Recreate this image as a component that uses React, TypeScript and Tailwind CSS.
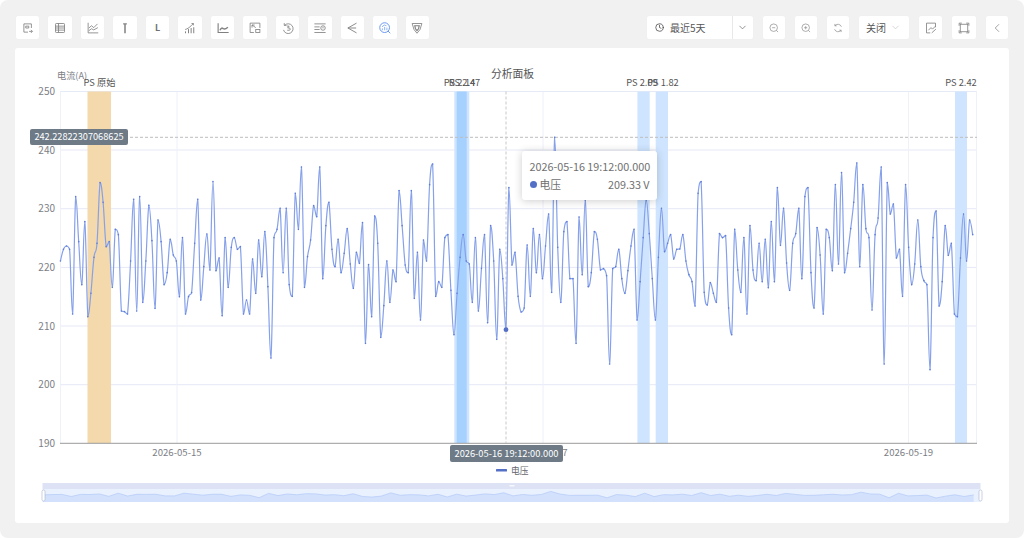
import React from "react";
import { ChevronDown, ChevronLeft, Clock } from "lucide-react";

// sampled series, y offsets read from the chart (3x, relative to y=140)
const RAW = [
  363, 328, 318, 328, 522, 170, 305, 434, 245, 530, 460, 352, 310, 128, 187, 320, 305, 442, 268, 284, 513, 515, 522, 363,
  178, 513, 170, 487, 363, 196, 302, 505, 240, 305, 434, 398, 298, 345, 363, 470, 293, 522, 470, 458, 310, 178, 480, 380,
  282, 390, 125, 392, 354, 527, 293, 442, 322, 293, 328, 320, 522, 480, 522, 357, 460, 300, 410, 275, 440,
  654, 293, 268, 205, 398, 205, 434, 469, 160, 268, 81, 442, 350, 300, 197, 230, 81, 416, 257, 187, 328, 380, 298, 398,
  340, 266, 372, 445, 337, 370, 248, 610, 374, 530, 228, 310, 592, 497, 363, 487, 390, 425, 152, 257, 375, 398, 152, 475,
  337, 540, 300, 363, 134, 72, 469, 425, 442, 293, 284, 451, 584, 460, 352, 284, 363, 372, 487, 293, 513, 385, 284, 548,
  257, 363, 598, 328, 416,
  569, 143, 375, 337, 469, 516, 504, 315, 469, 266, 398, 284, 416, 318, 222, 457, -8, 322, 487, 275, 245, 416, 416, 610,
  231, 404, 180, 440, 398, 275, 298, 390, 386, 407, 672, 386, 380, 328, 416, 460, 392, 318, 268, 540, 425, 293, 180, 281,
  416, 540, 352, 205, 335, 310, 284, 357, 328, 327, 284, 363, 404, 425, 498, 160, 125, 457, 495, 428, 460, 487, 281, 293,
  287, 504, 584, 268, 390,
  457, 293, 522, 257, 390, 422, 310, 425, 298, 443, 245, 425, 143, 316, 205, 369, 451, 310, 281, 205, 416, 170, 143, 398,
  504, 263, 345, 522, 268, 293, 392, 134, 372, 98, 398, 340, 266, 187, 69, 380, 134, 266, 293, 510, 284, 234, 81, 672,
  128, 222, 192, 354, 328, 469, 134, 322, 434, 372, 240, 380, 422, 434, 689, 293, 213, 498, 425, 257, 346, 310, 522, 530,
  354, 222, 363, 240, 284,
];

const STEP = (972.7 - 60.4) / (RAW.length - 1);
const points = RAW.map((z, i) => [60.4 + i * STEP, 140 + z / 3]);

const clamp = (v: number, a: number, b: number) => Math.min(Math.max(a, b), Math.max(Math.min(a, b), v));

const smoothPath = (pts: number[][]) => {
  let d = `M${pts[0][0].toFixed(1)} ${pts[0][1].toFixed(1)}`;
  for (let i = 0; i < pts.length - 1; i++) {
    const p0 = pts[Math.max(i - 1, 0)];
    const p1 = pts[i];
    const p2 = pts[i + 1];
    const p3 = pts[Math.min(i + 2, pts.length - 1)];
    const c1x = p1[0] + (p2[0] - p0[0]) * 0.2;
    const c1y = clamp(p1[1] + (p2[1] - p0[1]) * 0.2, p1[1], p2[1]);
    const c2x = p2[0] - (p3[0] - p1[0]) * 0.2;
    const c2y = clamp(p2[1] - (p3[1] - p1[1]) * 0.2, p1[1], p2[1]);
    d += `C${c1x.toFixed(1)} ${c1y.toFixed(1)} ${c2x.toFixed(1)} ${c2y.toFixed(1)} ${p2[0].toFixed(1)} ${p2[1].toFixed(1)}`;
  }
  return d;
};

const linePath = smoothPath(points);

const miniPoints = RAW.filter((_, i) => i % 3 === 0).map((z, i) => [43 + i * 3 * (937 / (RAW.length - 1)), 491.5 + (z / 689) * 6.5]);
const miniLine = miniPoints.map((p, i) => `${i ? "L" : "M"}${p[0].toFixed(1)} ${p[1].toFixed(1)}`).join("");
const miniArea = `${miniLine}L${miniPoints[miniPoints.length - 1][0].toFixed(1)} 502L43 502Z`;

const GRID_Y = [91.5, 150, 208.7, 267.4, 326, 384.7];
const GRID_X = [60.5, 177, 543, 908.5, 976.5];
const Y_LABELS: [string, number][] = [
  ["250", 91.5],
  ["240", 150],
  ["230", 208.7],
  ["220", 267.4],
  ["210", 326],
  ["200", 384.7],
  ["190", 443],
];
const BANDS: [number, number, string][] = [
  [87.5, 111, "#f3d9ab"],
  [454.3, 469.3, "#cfe5ff"],
  [456.7, 466.7, "#a6d1ff"],
  [637.4, 649.7, "#cfe5ff"],
  [655.7, 668, "#cfe5ff"],
  [955, 967, "#cfe5ff"],
];
const BAND_LABELS: [string, number][] = [
  ["PS 原始", 99.5],
  ["PS 2.14", 459.5],
  ["RS 2.47", 464.5],
  ["PS 2.09", 642],
  ["PS 1.82", 663],
  ["PS 2.42", 961],
];

const icons: React.ReactNode[] = [
  <>
    <path d="M12.500 8V2.500h-10v11H8" />
    <path d="M5 5.500h4v2.500H5zM9.500 12.500h4M12 10.500l2 2-2 2" />
  </>,
  <>
    <rect x="2" y="2" width="12" height="12" rx="1" />
    <path d="M2 5.500h12M2 8h12M2 10.800h12M6 2v12" />
  </>,
  <>
    <path d="M1.500 1v13.500h13.500" />
    <path d="M2.500 8l3.500-3 3 2.500 5-5M2.500 11.500l3.500-2.500 3 1.500 5.500-3" />
  </>,
  <>
    <path d="M5.500 2.500h5" strokeWidth="1.600" />
    <path d="M8 2.500V15" strokeWidth="2" />
  </>,
  null,
  <>
    <path d="M1.500 10c3-.5 7-3.500 11-8M10 2h2.500v2.500" />
    <path d="M2 15v-2.500M6 15V9.500M9.500 15V8M13 15V7" strokeWidth="1.300" />
  </>,
  <>
    <path d="M1.500 1.500V14H15.500" strokeWidth="1.500" />
    <path d="M4 11c2-4 3-3 4.500-2s2.500 1 6-2" strokeWidth="2" />
  </>,
  <>
    <path d="M6.500 14H1.500V1.500h13V8" />
    <path d="M9 7.500L4 4M4 7.500V4h3.500" />
    <rect x="9" y="10" width="5.500" height="4" />
  </>,
  <>
    <path d="M3.500 4.500A6.500 6.500 0 1 1 2 10.500M3 1.500v3h3" />
    <path d="M6.500 5.500h3L7.500 8h2a1.300 1.300 0 0 1 0 3H7" />
  </>,
  <>
    <path d="M0.500 2.500h15M0.500 6.500h7M0.500 10h7M0.500 14h15" />
    <circle cx="12" cy="8" r="3" />
    <path d="M12 6.500v2" />
  </>,
  <path d="M14 1.500L2.500 8 14 14.500M2.500 8h11" strokeWidth="1.200" />,
  <>
    <circle cx="7.500" cy="7.500" r="6.500" stroke="#5b8ff0" strokeWidth="1.200" />
    <path d="M12 12l3 3" stroke="#5b8ff0" strokeWidth="1.200" />
    <path d="M4.500 11V8.500M7.500 11V6.500M10.500 11V7.500M4 6.500l3-2.500 3 1" stroke="#7aa5f2" />
  </>,
  <>
    <path d="M1.500 2h13l-2.500 8-4 5-4-5z" />
    <path d="M5 5h6l-1 4-2 2.500L6 9z" strokeWidth="1.500" />
  </>,
];

const Glyph: React.FC<{ children: React.ReactNode; className?: string }> = ({ children, className }) => (
  <svg viewBox="0 0 16 16" fill="none" stroke="currentColor" strokeWidth="1.100" className={className ?? "h-[12px] w-[12px] text-[#808080]"}>
    {children}
  </svg>
);

const ToolButton: React.FC<{ className?: string; children: React.ReactNode }> = ({ className, children }) => (
  <button className={`flex h-[25px] items-center justify-center rounded-[3px] border border-[#f0f0f0] bg-white ${className ?? "w-[25.300px]"}`}>
    {children}
  </button>
);

const ChartPanel: React.FC = () => (
  <svg viewBox="15 48 994 475" className="block h-full w-full">
    {GRID_Y.map((y) => (
      <line key={y} x1="60" x2="977" y1={y} y2={y} stroke="#e6e9f6" strokeWidth="1" />
    ))}
    {GRID_X.map((x) => (
      <line key={x} x1={x} x2={x} y1="91.500" y2="443" stroke="#eef0fa" strokeWidth="1" />
    ))}
    {BANDS.map(([a, b, fill]) => (
      <rect key={a} x={a} y="91.500" width={b - a} height="351.500" fill={fill} />
    ))}

    <text x="512.500" y="78" textAnchor="middle" fontSize="10.800" fill="#555555">分析面板</text>
    <text x="57" y="78.500" fontSize="9.200" fill="#7c7e86">电流(A)</text>
    {BAND_LABELS.map(([t, x]) => (
      <text key={t} x={x} y="86" textAnchor="middle" fontSize="9.300" fill="#555555">{t}</text>
    ))}
    {Y_LABELS.map(([t, y]) => (
      <text key={t} x="55" y={y + 3.500} textAnchor="end" fontSize="10" fill="#7c7e86">{t}</text>
    ))}
    <text x="177" y="455.500" textAnchor="middle" fontSize="9.600" fill="#7c7e86">2026-05-15</text>
    <text x="543" y="455.500" textAnchor="middle" fontSize="9.600" fill="#7c7e86">2026-05-17</text>
    <text x="908.500" y="455.500" textAnchor="middle" fontSize="9.600" fill="#7c7e86">2026-05-19</text>

    <line x1="60" x2="977" y1="443.300" y2="443.300" stroke="#9a9a9a" strokeWidth="1" />
    <line x1="60" x2="977" y1="137.300" y2="137.300" stroke="#bdbdbd" strokeWidth="1" strokeDasharray="3 2" />
    <line x1="506" x2="506" y1="91.500" y2="443" stroke="#c8c8c8" strokeWidth="1" strokeDasharray="3 2" />

    <path d={linePath} fill="none" stroke="#86a1ea" strokeWidth="1.200" />
    {points.map(([x, y], i) => (
      <circle key={i} cx={x} cy={y} r="0.800" fill="#5f7dd6" />
    ))}
    <circle cx="506" cy="329.700" r="2.400" fill="#5470c6" />

    {/* legend */}
    <rect x="496" y="469" width="11" height="2.400" rx="0.500" fill="#5470c6" />
    <text x="511" y="473.500" fontSize="8.800" fill="#666870">电压</text>

    {/* data zoom */}
    <rect x="42.500" y="483" width="938" height="6" fill="#dde3f5" />
    <rect x="42.500" y="489" width="938" height="13" fill="#e9f0fe" />
    <path d={miniArea} fill="#d3e1fc" />
    <path d={miniLine} fill="none" stroke="#b8cdf8" strokeWidth="0.800" />
    <rect x="509.500" y="485" width="5" height="1.500" fill="#f6f8fd" />
    <rect x="42" y="490" width="3" height="11" rx="1.500" fill="#ffffff" stroke="#a9b4cc" strokeWidth="0.600" />
    <rect x="979" y="490" width="3" height="11" rx="1.500" fill="#ffffff" stroke="#a9b4cc" strokeWidth="0.600" />
  </svg>
);

export default function App() {
  return (
    <div className="h-[538px] w-[1024px] overflow-hidden bg-white font-['Noto_Sans_CJK_SC',sans-serif]">
      <div className="flex h-full flex-col gap-[8px] rounded-lg bg-[#f1f1f1] p-[15px]">
        {/* toolbar */}
        <div className="flex h-[25px] items-center">
          <div className="flex gap-[7.200px]">
            {icons.map((icon, i) =>
              icon ? (
                <ToolButton key={i}>
                  <Glyph>{icon}</Glyph>
                </ToolButton>
              ) : (
                <ToolButton key={i}>
                  <span className="text-[9px] font-bold text-[#6f6f6f]">L</span>
                </ToolButton>
              ),
            )}
          </div>
          <div className="ml-auto flex gap-[8px]">
            <div className="flex h-[25px] w-[108px] items-center rounded-[3px] border border-[#f0f0f0] bg-white">
              <div className="flex h-full w-[86px] items-center gap-[6px] border-r border-[#e8e8e8] pl-[8px] text-[10px] text-[#555555]">
                <Clock className="h-[9px] w-[9px] text-[#444444]" strokeWidth={2} />
                <span>最近5天</span>
              </div>
              <div className="flex flex-1 items-center justify-center">
                <ChevronDown className="h-[11px] w-[11px] text-[#666666]" strokeWidth={1.500} />
              </div>
            </div>
            <ToolButton className="w-[24px]">
              <Glyph className="h-[10px] w-[10px] text-[#8a8a8a]">
                <circle cx="7.500" cy="7.500" r="6" />
                <path d="M12 12l2.500 2.500M5 7.500h5" />
              </Glyph>
            </ToolButton>
            <ToolButton className="w-[24px]">
              <Glyph className="h-[10px] w-[10px] text-[#8a8a8a]">
                <circle cx="7.500" cy="7.500" r="6" />
                <path d="M12 12l2.500 2.500M5 7.500h5M7.500 5v5" />
              </Glyph>
            </ToolButton>
            <ToolButton className="w-[24px]">
              <Glyph className="h-[10px] w-[10px] text-[#8a8a8a]">
                <path d="M13.500 6A6 6 0 0 0 3 4.500M2.500 10A6 6 0 0 0 13 11.500" />
                <path d="M3 1.500v3h3M13 14.500v-3h-3" />
              </Glyph>
            </ToolButton>
            <div className="flex h-[25px] w-[52px] items-center justify-between rounded-[3px] border border-[#f0f0f0] bg-white pl-[7px] pr-[8px] text-[10px] text-[#555555]">
              <span>关闭</span>
              <ChevronDown className="h-[11px] w-[11px] text-[#b5b5b5]" strokeWidth={1.200} />
            </div>
            <ToolButton>
              <Glyph>
                <path d="M14 7V1.500H2v13h5" />
                <path d="M4.500 11l3.500-3.500L10 9.500l4-4M9 14.500l5.500-5" />
              </Glyph>
            </ToolButton>
            <ToolButton>
              <Glyph>
                <rect x="3" y="3" width="10" height="10" />
                <path d="M1.500 5V1.500H5M11 1.500h3.500V5M14.500 11v3.500H11M5 14.500H1.500V11" />
              </Glyph>
            </ToolButton>
            <ToolButton className="w-[24.500px]">
              <ChevronLeft className="h-[14px] w-[14px] text-[#7c7c7c]" strokeWidth={1.200} />
            </ToolButton>
          </div>
        </div>

        {/* chart card */}
        <div className="relative min-h-0 flex-1 rounded-[3px] bg-white">
          <ChartPanel />

          {/* axis pointer labels */}
          <div className="absolute left-[15px] top-[81px] flex h-[16px] w-[98px] items-center justify-center rounded-[2px] bg-[#6e7b87] text-[9.200px] text-white">
            242.22822307068625
          </div>
          <div className="absolute left-[435px] top-[397px] flex h-[17px] w-[113px] items-center justify-center rounded-[2px] bg-[#6e7b87] text-[9.300px] text-white">
            2026-05-16 19:12:00.000
          </div>

          {/* tooltip */}
          <div className="absolute left-[507px] top-[103px] h-[49px] w-[135px] rounded-[3px] bg-white px-[7.500px] pt-[6px] text-[10.800px] leading-[18px] text-[#707070] shadow-[0_1px_8px_rgba(0,0,0,0.2)]">
            <div className="whitespace-nowrap">2026-05-16 19:12:00.000</div>
            <div className="flex items-center">
              <span className="mr-[3px] h-[7px] w-[7px] rounded-full bg-[#5470c6]" />
              <span>电压</span>
              <span className="ml-auto">209.33 V</span>
            </div>
          </div>
        </div>
      </div>
    </div>
  );
}
